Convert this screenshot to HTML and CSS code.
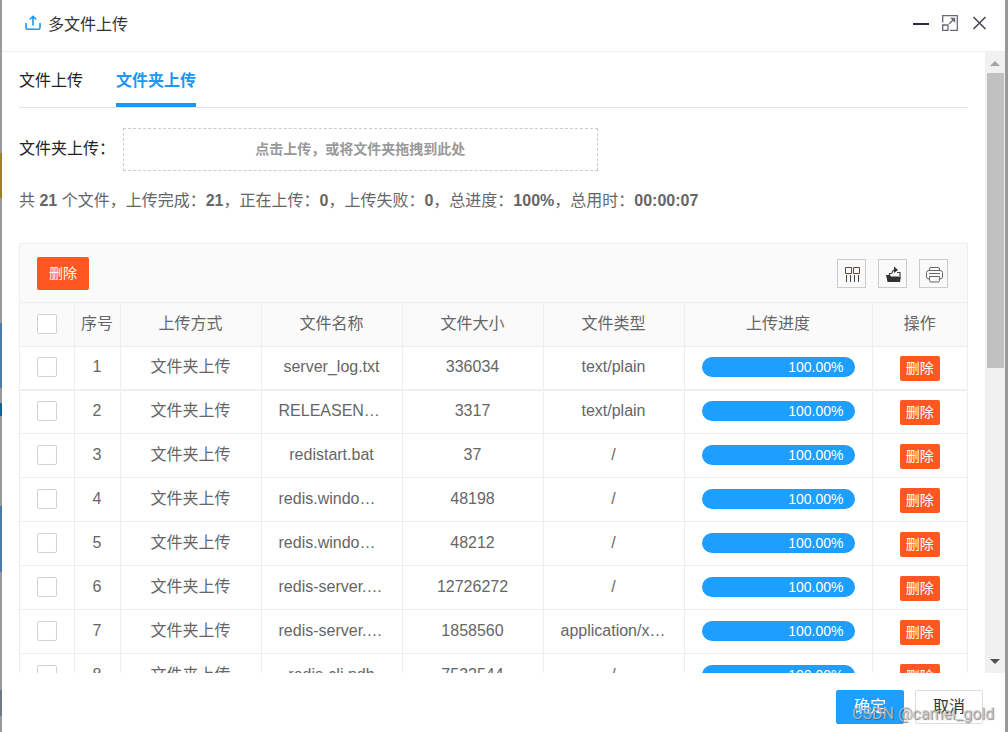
FILE: index.html
```html
<!DOCTYPE html>
<html lang="zh-CN">
<head>
<meta charset="utf-8">
<title>多文件上传</title>
<link rel="stylesheet" href="styles.css">
</head>
<body>
<div class="backdrop">
<section class="dialog" role="dialog" aria-labelledby="dialog-title">
  <header class="dialog-header">
    <svg class="title-icon" viewBox="0 0 16 16" width="16" height="16" fill="none" stroke="#1f97e4" stroke-width="1.6" stroke-linecap="round" stroke-linejoin="round"><path d="M1 8.5v4.2c0 1 .6 1.6 1.6 1.6h10.8c1 0 1.6-.6 1.6-1.6V8.500M8 10V1.500M5.200 4L8 1.200 10.800 4"/></svg>
    <h1 class="dialog-title" id="dialog-title">多文件上传</h1>
    <div class="window-tools">
      <button class="window-button" type="button" aria-label="最小化"><svg viewBox="0 0 16 16" width="16" height="16"><path d="M0 9h16" stroke="#2e2d3c" stroke-width="2"/></svg></button>
      <button class="window-button" type="button" aria-label="最大化"><svg viewBox="0 0 16 16" width="16" height="16" fill="none" stroke="#6a6976" stroke-width="1.300"><path d="M.7 7.500V.7h14.600v14.600H8M.7 10h5.300v5.300H.7z"/><path d="M7 9l5-5"/><path d="M8 2.800h5.200V8z" fill="#6a6976" stroke="none"/></svg></button>
      <button class="window-button" type="button" aria-label="关闭"><svg viewBox="0 0 16 16" width="16" height="16"><path d="M2.500 2l12 12M14.500 2l-12 12" stroke="#4a4955" stroke-width="1.600"/></svg></button>
    </div>
  </header>
  <div class="dialog-body">
    <main class="content">
      <nav class="tabs" role="tablist">
        <button class="tab" type="button" role="tab">文件上传</button>
        <button class="tab tab-active" type="button" role="tab" aria-selected="true">文件夹上传</button>
      </nav>
      <div class="upload-row">
        <label class="upload-label" for="drop">文件夹上传：</label>
        <button class="drop-zone" id="drop" type="button">点击上传，或将文件夹拖拽到此处</button>
      </div>
      <p class="summary">共 <b>21</b> 个文件，上传完成：<b>21</b>，正在上传：<b>0</b>，上传失败：<b>0</b>，总进度：<b>100%</b>，总用时：<b>00:00:07</b></p>
      <div class="grid">
        <div class="toolbar">
          <button class="danger" type="button">删除</button>
          <div class="tools">
            <button class="tool" type="button" aria-label="筛选列"><svg viewBox="0 0 17 17" width="17" height="17" fill="none" stroke="#444"><path d="M1.500 1.500h6v6h-6zM9.500 1.500h6v6h-6z" stroke="#5a4a35"/><path d="M2.500 9v7M6.500 9v7M10.500 9v7M14.500 9v7"/></svg></button>
            <button class="tool" type="button" aria-label="导出"><svg viewBox="0 0 17 17" width="17" height="17"><path d="M1 9h4l1 1.500h10L15 16H2.500z" fill="#333"/><path d="M4.500 9V7.500h2M12 6.500h3V10M7 7.500c0-2.500 1-3.500 3.500-3.500" fill="none" stroke="#444" stroke-width="1.200"/><path d="M9 .5l4 3.500-4 3z" fill="#333"/></svg></button>
            <button class="tool" type="button" aria-label="打印"><svg viewBox="0 0 17 17" width="17" height="17" fill="none" stroke="#666"><path d="M3.500 4.500V3q0-1.500 1.500-1.500h7q1.500 0 1.500 1.500v1.500M3.500 13H3Q.5 13 .5 11V6.500Q.5 4.500 3 4.500h11q2.500 0 2.500 2V11q0 2-2.500 2h-.5M3.500 10.500h10v4q0 1.500-1.500 1.500H5q-1.500 0-1.500-1.500zM3 7.500h11"/></svg></button>
          </div>
        </div>
        <table class="files">
          <colgroup><col class="col-check"><col class="col-index"><col><col><col><col><col class="col-progress"><col class="col-action"></colgroup>
          <thead><tr><th><input class="check" type="checkbox" aria-label="全选"></th><th class="index">序号</th><th>上传方式</th><th>文件名称</th><th>文件大小</th><th>文件类型</th><th>上传进度</th><th>操作</th></tr></thead>
          <tbody>
            <tr class="first"><td><input class="check" type="checkbox" aria-label="选择 1"></td><td class="index">1</td><td>文件夹上传</td><td>server_log.txt</td><td>336034</td><td>text/plain</td><td><div class="bar">100.00%</div></td><td><button class="danger small" type="button">删除</button></td></tr>
            <tr><td><input class="check" type="checkbox" aria-label="选择 2"></td><td class="index">2</td><td>文件夹上传</td><td class="cut">RELEASEN…</td><td>3317</td><td>text/plain</td><td><div class="bar">100.00%</div></td><td><button class="danger small" type="button">删除</button></td></tr>
            <tr><td><input class="check" type="checkbox" aria-label="选择 3"></td><td class="index">3</td><td>文件夹上传</td><td>redistart.bat</td><td>37</td><td>/</td><td><div class="bar">100.00%</div></td><td><button class="danger small" type="button">删除</button></td></tr>
            <tr><td><input class="check" type="checkbox" aria-label="选择 4"></td><td class="index">4</td><td>文件夹上传</td><td class="cut">redis.windo…</td><td>48198</td><td>/</td><td><div class="bar">100.00%</div></td><td><button class="danger small" type="button">删除</button></td></tr>
            <tr><td><input class="check" type="checkbox" aria-label="选择 5"></td><td class="index">5</td><td>文件夹上传</td><td class="cut">redis.windo…</td><td>48212</td><td>/</td><td><div class="bar">100.00%</div></td><td><button class="danger small" type="button">删除</button></td></tr>
            <tr><td><input class="check" type="checkbox" aria-label="选择 6"></td><td class="index">6</td><td>文件夹上传</td><td class="cut">redis-server.…</td><td>12726272</td><td>/</td><td><div class="bar">100.00%</div></td><td><button class="danger small" type="button">删除</button></td></tr>
            <tr><td><input class="check" type="checkbox" aria-label="选择 7"></td><td class="index">7</td><td>文件夹上传</td><td class="cut">redis-server.…</td><td>1858560</td><td class="cut">application/x…</td><td><div class="bar">100.00%</div></td><td><button class="danger small" type="button">删除</button></td></tr>
            <tr><td><input class="check" type="checkbox" aria-label="选择 8"></td><td class="index">8</td><td>文件夹上传</td><td>redis-cli.pdb</td><td>7532544</td><td>/</td><td><div class="bar">100.00%</div></td><td><button class="danger small" type="button">删除</button></td></tr>
          </tbody>
        </table>
      </div>
    </main>
    <div class="scrollbar" aria-hidden="true">
      <svg class="arrow" viewBox="0 0 20 21" width="20" height="21"><path d="M5 14l5-5 5 5z" fill="#a3a3a3"/></svg>
      <div class="track"><div class="thumb"></div></div>
      <svg class="arrow" viewBox="0 0 20 21" width="20" height="21"><path d="M5 7l5 5 5-5z" fill="#505050"/></svg>
    </div>
  </div>
  <footer class="dialog-footer">
    <button class="action primary" type="button">确定</button>
    <button class="action" type="button">取消</button>
    <span class="watermark">CSDN @camel_gold</span>
  </footer>
</section>
</div>
</body>
</html>
```
FILE: styles.css
```css
* { box-sizing: border-box; }
body {
  margin: 0;
  font-family: "Liberation Sans", "Noto Sans CJK SC", sans-serif;
  font-size: 16px;
  line-height: 24px;
  color: #222;
}
button { font: inherit; cursor: pointer; }
.backdrop {
  height: 100vh;
  padding-left: 2px;
  border-right: 3px solid #999;
  background: linear-gradient(#999 153px, #9b8120 153px 198px, #999 198px 323px, #4d7ba8 323px 388px, #999 388px 403px, #17608f 403px 416px, #999 416px 506px, #4d7ba8 506px 572px, #999 572px 690px, #6e7b87 690px 716px, #999 716px);
}
.dialog {
  height: 100%;
  display: flex;
  flex-direction: column;
  background: #fff;
}
.dialog-header {
  display: flex;
  align-items: center;
  gap: 7px;
  height: 52px;
  flex: none;
  padding: 0 18px 6px 23px;
  border-bottom: 1px solid #eee;
}
.dialog-title { margin: 0; padding-top: 4px; font-size: 16px; font-weight: 400; color: #333; }
.window-tools { display: flex; gap: 13px; margin-left: auto; }
.window-button { width: 16px; height: 16px; padding: 0; border: 0; background: none; }
.window-button svg, .tool svg, .arrow { display: block; }
.dialog-body { flex: 1; min-height: 0; display: flex; }
.content { flex: 1; min-width: 0; padding: 0 17px; overflow: hidden; }
.tabs { display: flex; gap: 33px; height: 56px; border-bottom: 1px solid #e2e2e2; }
.tab {
  padding: 6px 0 0;
  border: 0;
  border-bottom: 4px solid transparent;
  background: none;
  color: #222;
}
.tab-active { border-bottom-color: #2196f3; color: #2196f3; font-weight: 700; }
.upload-row { display: flex; align-items: center; gap: 8px; margin-top: 20px; }
.upload-label { flex: none; width: 96px; padding-bottom: 2px; white-space: nowrap; }
.drop-zone {
  width: 50%;
  height: 43px;
  padding: 0 0 2px;
  border: 1px dashed #ccc;
  background: #fff;
  color: #999;
  font-size: 14px;
  font-weight: 700;
}
.summary { margin: 18px 0 30px; color: #666; }
.grid { border: 1px solid #eee; border-bottom: 0; color: #666; }
.toolbar {
  display: flex;
  align-items: center;
  justify-content: space-between;
  height: 58px;
  padding: 0 19px 0 17px;
  background: #fafafa;
}
.danger {
  height: 33px;
  padding: 0 12px;
  border: 0;
  border-radius: 2px;
  background: #ff5722;
  color: #fff;
  font-size: 14px;
  line-height: 20px;
}
.small { display: block; height: 25px; margin: 4px auto 0; padding: 0 6px 2px; }
.tools { display: flex; gap: 12px; }
.tool { display: grid; place-items: center; width: 29px; height: 29px; padding: 2px 0 0 2px; border: 1px solid #ccc; background: none; }
.files { width: 100%; table-layout: fixed; border-collapse: collapse; }
.col-check { width: 54px; }
.col-index { width: 46px; }
.col-progress { width: 188px; }
.col-action { width: 95px; }
.files th, .files td {
  height: 44px;
  padding: 0 17px 2px;
  border: 1px solid #eee;
  font-weight: 400;
  text-align: center;
  white-space: nowrap;
  overflow: hidden;
}
.files .first td { height: 43px; border-bottom-width: 2px; }
.files tr > :first-child { border-left: 0; }
.files tr > :last-child { border-right: 0; }
.files th { background: #fafafa; }
.files .index { padding: 0 0 2px; }
.files .cut { text-align: left; }
.check {
  display: block;
  width: 20px;
  height: 20px;
  margin: 0;
  appearance: none;
  border: 1px solid #d2d2d2;
  border-radius: 2px;
  background: #fff;
}
.bar {
  height: 20px;
  padding-right: 11px;
  border-radius: 10px;
  background: #1e9fff;
  color: #fff;
  font-size: 14px;
  line-height: 20px;
  text-align: right;
}
.scrollbar { display: flex; flex-direction: column; width: 20px; padding: 0 1px 0 2px; background: #f1f1f1; }
.arrow { flex: none; margin-left: -2px; }
.track { flex: 1; }
.thumb { height: 51%; background: #c1c1c1; }
.dialog-footer {
  position: relative;
  display: flex;
  flex: none;
  justify-content: flex-end;
  gap: 11px;
  padding: 17px 22px 8px;
}
.action { height: 34px; padding: 0 17px; border: 1px solid #dedede; border-radius: 2px; background: #fff; color: #333; }
.primary { border-color: #1e9fff; background: #1e9fff; color: #fff; }
.watermark {
  position: absolute;
  right: 11px;
  bottom: 6px;
  color: rgba(200, 200, 200, 0.8);
  text-shadow: 1px 1px 1px rgba(80, 80, 80, 0.7);
  font-family: Roboto, "Liberation Sans", sans-serif;
  font-size: 16px;
  pointer-events: none;
}
```
